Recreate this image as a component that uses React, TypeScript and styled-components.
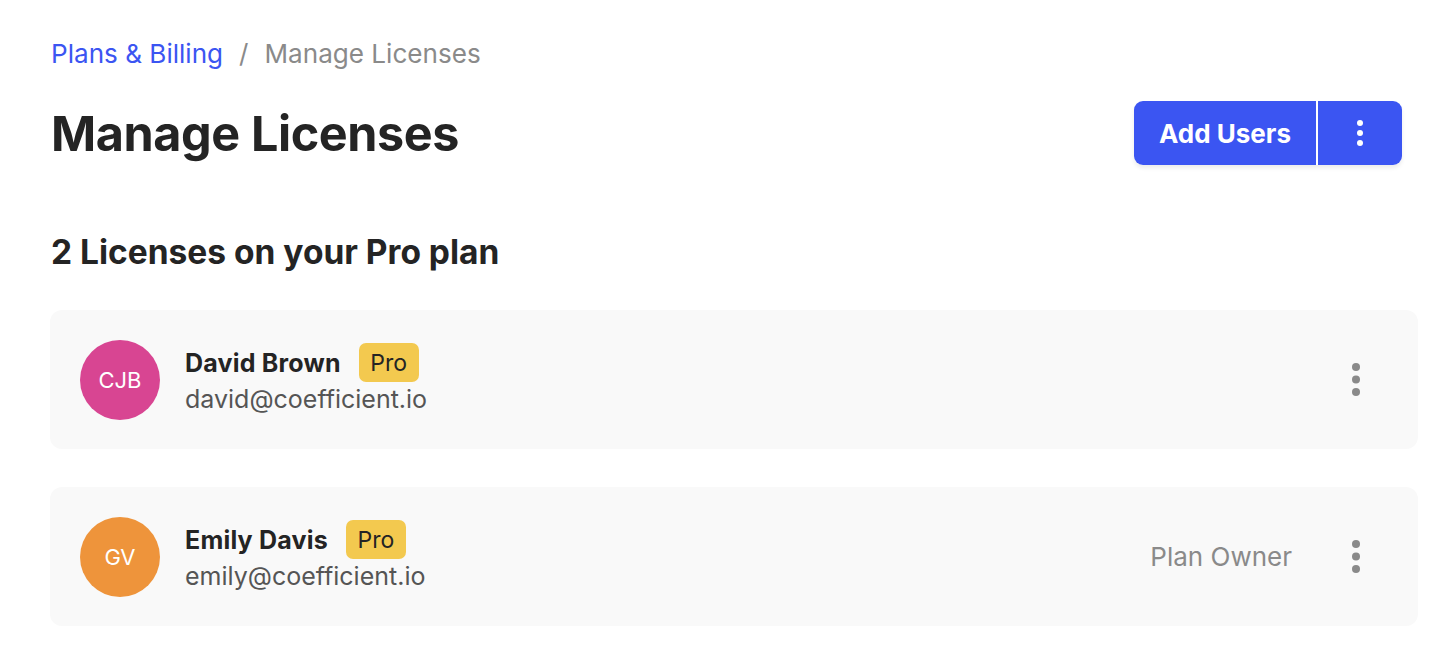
import React from "react";
import styled, { createGlobalStyle } from "styled-components";

const GlobalStyle = createGlobalStyle`
  html, body { margin: 0; padding: 0; background: #ffffff; }
  body { font-family: Inter, "Noto Sans", "Liberation Sans", sans-serif; color: #242424; }
  * { box-sizing: border-box; }
`;

const Page = styled.div`
  padding: 36px 30px 40px 51px;
  display: flex;
  flex-direction: column;
`;

const Breadcrumb = styled.nav`
  display: flex;
  align-items: center;
  gap: 16px;
  font-size: 26.1px;
  line-height: 36px;
  height: 36px;
`;

const Crumb = styled.span<{ $active?: boolean }>`
  color: ${(p) => (p.$active ? "#3b55f2" : "#8a8a8a")};
`;

const Sep = styled.span`
  color: #8a8a8a;
`;

const HeaderRow = styled.div`
  display: flex;
  align-items: center;
  justify-content: space-between;
  margin-top: 29px;
  padding-right: 16px;
  height: 64px;
`;

const Title = styled.h1`
  margin: 0;
  font-size: 48.5px;
  font-weight: 700;
  color: #242424;
  letter-spacing: -0.4px;
`;

const ButtonGroup = styled.div`
  display: flex;
  height: 64px;
  border-radius: 9px;
  overflow: hidden;
  box-shadow: 0 3px 4px rgba(0, 0, 0, 0.08);
  gap: 2px;
  background: #ffffff;
`;

const PrimaryButton = styled.button`
  border: none;
  background: #3b55f2;
  color: #ffffff;
  font-family: inherit;
  font-weight: 700;
  font-size: 26px;
  padding: 0;
  width: 182px;
  cursor: pointer;
`;

const IconButton = styled.button`
  border: none;
  background: #3b55f2;
  width: 84px;
  display: flex;
  align-items: center;
  justify-content: center;
  cursor: pointer;
`;

const SectionTitle = styled.h2`
  margin: 67px 0 0 0;
  font-size: 33.5px;
  font-weight: 700;
  color: #242424;
  line-height: 40px;
`;

const List = styled.div`
  display: flex;
  flex-direction: column;
  gap: 38px;
  margin-top: 38px;
`;

const Card = styled.div`
  height: 139px;
  background: #f9f9f9;
  border-radius: 12px;
  display: flex;
  align-items: center;
  padding: 0 58px 0 30px;
  width: 1368px;
  margin-left: -1px;
`;

const Avatar = styled.div<{ $color: string }>`
  width: 80px;
  height: 80px;
  border-radius: 50%;
  background: ${(p) => p.$color};
  color: #ffffff;
  display: flex;
  align-items: center;
  justify-content: center;
  font-size: 22px;
  flex-shrink: 0;
`;

const Info = styled.div`
  display: flex;
  flex-direction: column;
  margin-left: 25px;
  flex: 1;
`;

const NameRow = styled.div`
  display: flex;
  align-items: center;
  gap: 18px;
  height: 39px;
`;

const Name = styled.span`
  font-size: 25px;
  font-weight: 700;
  color: #242424;
  letter-spacing: 0.2px;
`;

const Badge = styled.span`
  background: #f3c94f;
  color: #242424;
  border-radius: 7px;
  height: 39px;
  width: 60px;
  justify-content: center;
  display: flex;
  align-items: center;
  font-size: 23px;
`;

const Email = styled.span`
  font-size: 25px;
  color: #555555;
  line-height: 34px;
`;

const Role = styled.span`
  font-size: 26px;
  color: #8a8a8a;
  margin-right: 60px;
`;

const Dots = ({ color, size, gap }: { color: string; size: number; gap: number }) => {
  const r = size / 2;
  const h = size * 3 + gap * 2;
  return (
    <svg width={size} height={h} viewBox={`0 0 ${size} ${h}`}>
      <circle cx={r} cy={r} r={r} fill={color} />
      <circle cx={r} cy={h / 2} r={r} fill={color} />
      <circle cx={r} cy={h - r} r={r} fill={color} />
    </svg>
  );
};

const users = [
  { initials: "CJB", color: "#d84592", name: "David Brown", email: "david@coefficient.io", role: "" },
  { initials: "GV", color: "#ee943b", name: "Emily Davis", email: "emily@coefficient.io", role: "Plan Owner" },
];

export default function App() {
  return (
    <>
      <GlobalStyle />
      <Page>
        <Breadcrumb>
          <Crumb $active>Plans &amp; Billing</Crumb>
          <Sep>/</Sep>
          <Crumb>Manage Licenses</Crumb>
        </Breadcrumb>
        <HeaderRow>
          <Title>Manage Licenses</Title>
          <ButtonGroup>
            <PrimaryButton>Add Users</PrimaryButton>
            <IconButton aria-label="More">
              <Dots color="#ffffff" size={6} gap={4} />
            </IconButton>
          </ButtonGroup>
        </HeaderRow>
        <SectionTitle>2 Licenses on your Pro plan</SectionTitle>
        <List>
          {users.map((u) => (
            <Card key={u.email}>
              <Avatar $color={u.color}>{u.initials}</Avatar>
              <Info>
                <NameRow>
                  <Name>{u.name}</Name>
                  <Badge>Pro</Badge>
                </NameRow>
                <Email>{u.email}</Email>
              </Info>
              {u.role && <Role>{u.role}</Role>}
              <Dots color="#8a8a8a" size={8} gap={4.5} />
            </Card>
          ))}
        </List>
      </Page>
    </>
  );
}
